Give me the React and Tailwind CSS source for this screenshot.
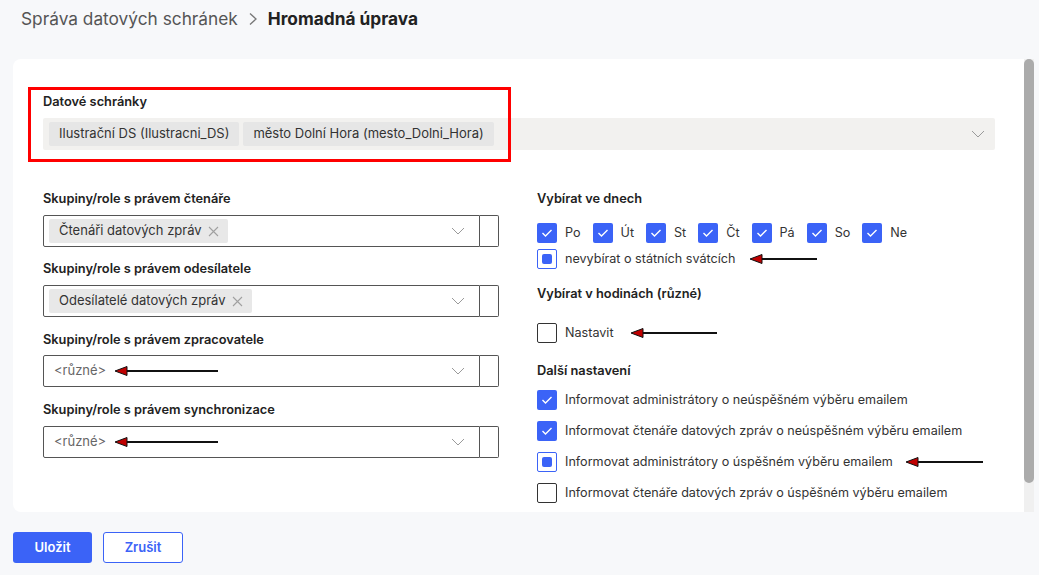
import React from "react";

const font = { fontFamily: "Inter, 'Noto Sans', sans-serif" };

function Arrow({ w = 100, className = "" }) {
  return (
    <svg width={w} height="12" viewBox={`0 0 ${w} 12`} className={className}>
      <line x1="10" y1="6" x2={w} y2="6" stroke="#111" strokeWidth="2" />
      <polygon points="1,6 13,1.5 13,10.5" fill="#c00000" stroke="#111" strokeWidth="1" />
    </svg>
  );
}

function Chevron({ className = "" }) {
  return (
    <svg width="14" height="8" viewBox="0 0 14 8" className={className}>
      <polyline points="1,1 7,7 13,1" fill="none" stroke="#9a9a9a" strokeWidth="1" />
    </svg>
  );
}

function Box({ state }) {
  if (state === "checked")
    return (
      <span className="w-[20px] h-[20px] rounded-[2px] bg-[#3b63f7] flex items-center justify-center shrink-0">
        <svg width="12" height="10" viewBox="0 0 12 10">
          <polyline points="1.5,5 4.5,8 10.5,2" fill="none" stroke="#fff" strokeWidth="1.4" />
        </svg>
      </span>
    );
  if (state === "mixed")
    return (
      <span className="w-[20px] h-[20px] rounded-[2px] border border-[#3b63f7] bg-white flex items-center justify-center shrink-0">
        <span className="w-[10px] h-[10px] rounded-[2px] bg-[#3b63f7]" />
      </span>
    );
  return <span className="w-[20px] h-[20px] rounded-[2px] border border-[#333] bg-white shrink-0" />;
}

function Select({ children }) {
  return (
    <div className="flex h-[32px]">
      <div className="flex-1 flex items-center border border-[#555] rounded-l-[2px] pl-[5px] pr-[14px]">
        <div className="flex-1 flex items-center">{children}</div>
        <Chevron />
      </div>
      <div className="w-[19px] border border-l-0 border-[#555] rounded-r-[2px]" />
    </div>
  );
}

function Chip({ children }) {
  return (
    <span className="h-[24px] flex items-center bg-[#e8e8e8] rounded-[2px] pl-[10px] pr-[9px] text-[13px] text-[#333]">
      {children}
      <svg width="11" height="11" viewBox="0 0 11 11" className="ml-[6px]">
        <path d="M1,1 L10,10 M10,1 L1,10" stroke="#a0a0a0" strokeWidth="1.1" fill="none" />
      </svg>
    </span>
  );
}

function Label({ children }) {
  return <div className="text-[12.8px] font-semibold text-[#222] leading-[16px]">{children}</div>;
}

function Row({ state, children, arrow }) {
  return (
    <div className="flex items-center h-[20px] text-[12.6px] text-[#333]">
      <Box state={state} />
      <span className="ml-[8px]">{children}</span>
      {arrow}
    </div>
  );
}

export default function App() {
  const days = ["Po", "Út", "St", "Čt", "Pá", "So", "Ne"];
  return (
    <div className="w-[1039px] h-[575px] bg-[#f7f8fa] overflow-hidden" style={font}>
      <div className="h-[59px] pl-[21px] pt-[7px] flex items-start">
        <div className="flex items-center h-[24px] text-[17.3px]">
          <span className="text-[#555]">Správa datových schránek</span>
          <svg width="10" height="14" viewBox="0 0 10 14" className="ml-[10px] mr-[10px]">
            <polyline points="2,1.5 8,7 2,12.5" fill="none" stroke="#777" strokeWidth="1.3" />
          </svg>
          <span className="font-bold text-[#222]">Hromadná úprava</span>
        </div>
      </div>

      <div className="flex ml-[13px] h-[453px]">
        <div className="w-[1011px] bg-white rounded-tl-[8px] rounded-bl-[8px] relative pl-[30px] pr-[29px] pt-[35px]">
          <div className="absolute left-[15px] top-[28px] w-[483px] h-[75px] border-[3px] border-[#ff0000]" />
          <Label>Datové schránky</Label>
          <div className="mt-[8px] h-[32px] bg-[#f2f1ef] rounded-[2px] flex items-center pl-[6px] pr-[10px] gap-[4px]">
            <span className="h-[24px] flex items-center bg-[#e6e6e6] rounded-[2px] px-[10px] text-[13px] text-[#333]">
              Ilustrační DS (Ilustracni_DS)
            </span>
            <span className="h-[24px] flex items-center bg-[#e6e6e6] rounded-[2px] px-[10px] text-[13px] text-[#333]">
              město Dolní Hora (mesto_Dolni_Hora)
            </span>
            <div className="flex-1" />
            <Chevron />
          </div>

          <div className="flex mt-[41px]">
            <div className="w-[456px] flex flex-col">
              <Label>Skupiny/role s právem čtenáře</Label>
              <div className="mt-[8px]">
                <Select>
                  <Chip>Čtenáři datových zpráv</Chip>
                </Select>
              </div>
              <div className="mt-[14px]">
                <Label>Skupiny/role s právem odesílatele</Label>
              </div>
              <div className="mt-[8px]">
                <Select>
                  <Chip>Odesílatelé datových zpráv</Chip>
                </Select>
              </div>
              <div className="mt-[15px]">
                <Label>Skupiny/role s právem zpracovatele</Label>
              </div>
              <div className="mt-[7px]">
                <Select>
                  <span className="text-[13px] text-[#666] ml-[5px]">&lt;různé&gt;</span>
                  <Arrow w={104} className="ml-[8px]" />
                </Select>
              </div>
              <div className="mt-[15px]">
                <Label>Skupiny/role s právem synchronizace</Label>
              </div>
              <div className="mt-[8px]">
                <Select>
                  <span className="text-[13px] text-[#666] ml-[5px]">&lt;různé&gt;</span>
                  <Arrow w={104} className="ml-[8px]" />
                </Select>
              </div>
            </div>

            <div className="ml-[38px] flex flex-col">
              <Label>Vybírat ve dnech</Label>
              <div className="mt-[16px] flex items-center h-[20px] text-[12.6px] text-[#333]">
                {days.map((d) => (
                  <div key={d} className="flex items-center mr-[12px]">
                    <Box state="checked" />
                    <span className="ml-[8px]">{d}</span>
                  </div>
                ))}
              </div>
              <div className="mt-[6px]">
                <Row state="mixed" arrow={<Arrow w={68} className="ml-[14px]" />}>
                  nevybírat o státních svátcích
                </Row>
              </div>
              <div className="mt-[17px]">
                <Label>Vybírat v hodinách (různé)</Label>
              </div>
              <div className="mt-[21px]">
                <Row state="none" arrow={<Arrow w={87} className="ml-[16px]" />}>
                  Nastavit
                </Row>
              </div>
              <div className="mt-[20px]">
                <Label>Další nastavení</Label>
              </div>
              <div className="mt-[11px] flex flex-col gap-[11px]">
                <Row state="checked">Informovat administrátory o neúspěšném výběru emailem</Row>
                <Row state="checked">Informovat čtenáře datových zpráv o neúspěšném výběru emailem</Row>
                <Row state="mixed" arrow={<Arrow w={78} className="ml-[12px]" />}>
                  Informovat administrátory o úspěšném výběru emailem
                </Row>
                <Row state="none">Informovat čtenáře datových zpráv o úspěšném výběru emailem</Row>
              </div>
            </div>
          </div>
        </div>
        <div className="w-[10px] bg-[#f0f0f0] flex flex-col">
          <div className="h-[424px] bg-[#ababab] rounded-[5px]" />
        </div>
      </div>

      <div className="flex ml-[13px] mt-[20px] gap-[11px]">
        <button className="w-[79px] h-[31px] rounded-[3px] bg-[#3b63f7] text-white text-[13px] font-semibold">
          Uložit
        </button>
        <button className="w-[80px] h-[31px] rounded-[3px] border border-[#3b63f7] bg-white text-[#3b63f7] text-[13px] font-semibold">
          Zrušit
        </button>
      </div>
    </div>
  );
}
